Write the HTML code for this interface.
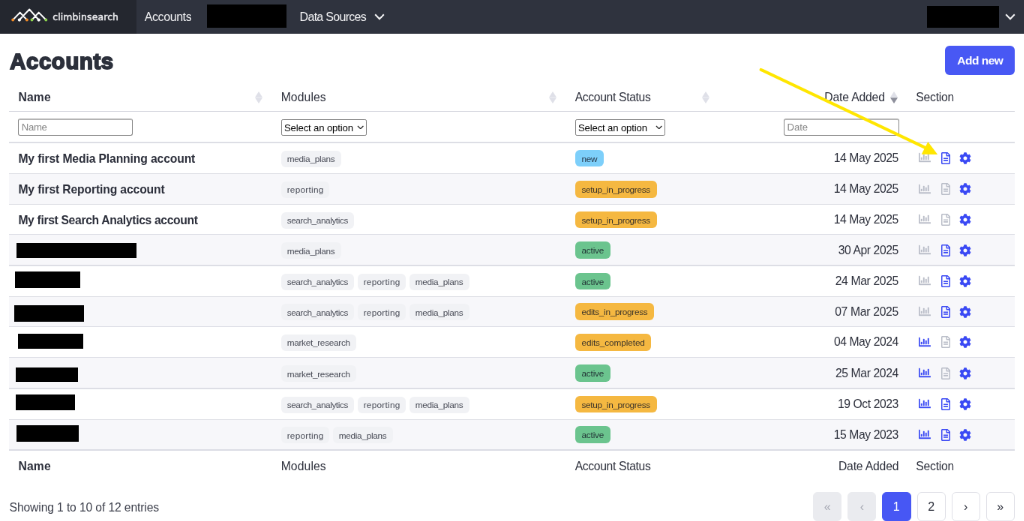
<!DOCTYPE html>
<html lang="en">
<head>
<meta charset="utf-8">
<title>Accounts</title>
<style>
*{box-sizing:border-box;margin:0;padding:0}
html,body{width:1024px;height:521px;overflow:hidden;background:#fff}
body{font-family:"Liberation Sans",Arial,sans-serif;color:#2b2e3a;font-size:15.7px}
#page{position:absolute;left:0;top:0;width:1365.33px;height:694.67px;transform:scale(.75);transform-origin:0 0;background:#fff;overflow:hidden;will-change:transform}
nav{position:absolute;left:0;top:0;width:100%;height:45px;background:#2f333e;color:#f3f3f5;font-size:16px}
.logo{position:absolute;left:0;top:0;width:182px;height:45px;background:#24272f}
.logo svg{position:absolute;left:0;top:0;width:80px;height:45.333px}
.logo .lt{position:absolute;left:70.2px;top:12.6px;font-family:"DejaVu Sans","Liberation Sans",sans-serif;font-size:12.4px;font-weight:normal;color:#ededf0;line-height:20px;white-space:nowrap;-webkit-text-stroke:0.45px #ededf0}
.navt{position:absolute;top:12.6px;line-height:20px;white-space:nowrap}
.chev{position:absolute;top:18.3px;width:14px;height:9px}
.blk{position:absolute;background:#000}
h1{position:absolute;left:13.2px;top:61.6px;font-size:29.2px;line-height:40px;font-weight:bold;color:#2c303b;white-space:nowrap;-webkit-text-stroke:1.9px #2c303b;paint-order:stroke fill}
.btn{position:absolute;left:1260.4px;top:61px;width:93px;height:39px;border-radius:6px;background:#4858f4;color:#fff;font-weight:bold;font-size:15.5px;line-height:40.4px;text-align:center;white-space:nowrap}
table{position:absolute;left:12.4px;top:108px;width:1340.93px;border-collapse:separate;border-spacing:0;table-layout:fixed}
th,td{padding:0 12px;text-align:left;vertical-align:middle;white-space:nowrap;overflow:visible;position:relative}
thead tr.h th{height:41.34375px;padding-bottom:1.34375px;font-weight:normal;padding-top:3px}
thead tr.f th{height:41.34375px;font-weight:normal;padding-bottom:1.34375px;padding-top:1.5px}
tbody td{height:41.34375px;padding-bottom:1.34375px}
tbody tr:nth-child(2n) td{height:41.328125px}
tbody tr:nth-child(3) td,tbody tr:nth-child(6) td{height:40px}
tbody tr:last-child td{padding-bottom:2.671875px}
tbody tr.alt td{background-color:#f7f7fa}
tfoot th{height:40px;font-weight:normal;padding-top:8.6px;vertical-align:top;line-height:24px}
.b{font-weight:bold}
.sort{position:absolute;right:12.3px;top:13.5px;width:10px;height:16px}
.inp{display:inline-block;vertical-align:middle;height:22.6px;width:153px;border:1.34375px solid #858585;border-top:2px solid #b4b4b4;border-radius:3px;background:#fff;font-size:13.2px;line-height:19px;padding-left:3.4px;color:#858585;text-align:left;position:relative;top:-0.5px}
.sel{display:inline-block;vertical-align:middle;position:relative;height:22px;border:1.34375px solid #7f7f7f;border-radius:2.2px;background:#fff;font-size:13.2px;line-height:21.8px;padding-left:3.3px;color:#000;text-align:left}
.sch{position:absolute;right:2.4px;top:6.6px;width:9.4px;height:5.64px}
.c-name span{font-weight:bold;position:relative;top:1.05px}
.c-date span{position:relative;top:0.2px;left:0.6px}
.tag{display:inline-block;vertical-align:middle;position:relative;top:0.9px;height:22px;line-height:19.6px;padding:2.4px 8.4px 0 8px;border-radius:6px;background:#f1f2f5;color:#474a55;font-size:11.8px;margin-right:4.33px}
.st{display:inline-block;vertical-align:middle;position:relative;top:0.4px;height:22.6px;line-height:19.6px;padding:3px 9.4px 0 8.8px;border-radius:6px;font-size:11.8px;color:rgba(20,24,36,.85)}
.st-new{background:#7dcffa}
.st-setup_in_progress,.st-edits_in_progress,.st-edits_completed{background:#f5b841}
.st-active{background:#6bc48e}
.c-date,.h-date{text-align:right}
.ic{display:inline-block;vertical-align:middle;position:relative;top:-0.6px}
.ic.on{color:#3a49f4}
.ic.off{color:#b9bdc8}
.ic-chart{width:16px;height:16px;margin-left:3.6px;margin-right:13.9px;top:-1.2px}
.ic-doc{width:12px;height:16px;margin-right:12.6px}
.ic-gear{width:16px;height:16px}
.info{position:absolute;left:12.6px;top:665.3px;line-height:24px;color:#3b3e4a;white-space:nowrap}
.pg{position:absolute;top:656.2px;width:38px;height:38.5px;border:1.33px solid #dedfe6;border-radius:6px;background:#fff;text-align:center;line-height:38.2px;font-size:16px;color:#2b2e3a}
.pg.dis{background:#eaebef;color:#a7a9b4;border-color:#eaebef}
.pg.cur{background:#4757f4;border-color:#4757f4;color:#fff;margin-left:-0.8px;width:38.8px}
.arrow{position:absolute;left:0;top:0;width:1365.33px;height:694.67px;pointer-events:none}

tfoot th.h-date{padding-right:11px}
th:nth-child(3) .sort{right:13.6px}
.lines{position:absolute;left:0;top:0;width:1365.33px;height:694.67px;pointer-events:none}

.nav1{letter-spacing:-0.426px}
.nav2{letter-spacing:-0.709px}
.h1{letter-spacing:0.705px}
.btn{letter-spacing:-0.499px}
.hName{letter-spacing:0.212px}
.hMod{letter-spacing:0.123px}
.hSt{letter-spacing:-0.337px}
.hDate{letter-spacing:-0.162px}
.hSec{letter-spacing:-0.234px}
.phName{letter-spacing:-0.334px}
.phDate{letter-spacing:-0.114px}
.selopt{letter-spacing:-0.171px}
.n1{letter-spacing:-0.125px}
.n2{letter-spacing:-0.137px}
.n3{letter-spacing:-0.338px}
.t_media_plans{letter-spacing:-0.281px;padding-right:8.28px}
.t_reporting{letter-spacing:0.265px;padding-right:7.73px}
.t_search_analytics{letter-spacing:-0.413px;padding-right:8.41px}
.t_market_research{letter-spacing:-0.291px;padding-right:8.29px}
.s_new{letter-spacing:-0.346px;padding-right:8.75px}
.s_setup_in_progress{letter-spacing:-0.337px;padding-right:8.74px}
.s_active{letter-spacing:-0.173px;padding-right:8.57px}
.s_edits_in_progress{letter-spacing:-0.307px;padding-right:8.71px}
.s_edits_completed{letter-spacing:-0.102px;padding-right:8.50px}
.info{letter-spacing:-0.133px}
.d_14_May_2025{letter-spacing:-0.418px}
.d_30_Apr_2025{letter-spacing:-0.401px}
.d_24_Mar_2025{letter-spacing:-0.349px}
.d_07_Mar_2025{letter-spacing:-0.305px}
.d_04_May_2024{letter-spacing:-0.428px}
.d_25_Mar_2024{letter-spacing:-0.369px}
.d_19_Oct_2023{letter-spacing:-0.407px}
.d_15_May_2023{letter-spacing:-0.418px}
.logo_t{letter-spacing:0.139px}
</style>
</head>
<body>
<div id="page">
<nav>
<div class="logo">
<svg viewBox="0 0 60 34"><path d="M12.9 19.900 20 12.500 26.900 19.900M19.400 19.900 29.400 9.400 38.750 19.900M31.900 19.900 38.750 12.500 46 19.900" fill="none" stroke="#fff" stroke-width="1.5" stroke-linejoin="round"/><circle cx="12.900" cy="19.900" r="1.450" fill="#f28c28"/><circle cx="19.400" cy="19.900" r="1.600" fill="#fff"/><circle cx="26.900" cy="19.900" r="1.450" fill="#f28c28"/><circle cx="31.900" cy="19.900" r="1.450" fill="#8fd44f"/><circle cx="38.750" cy="19.900" r="1.600" fill="#fff"/><circle cx="46" cy="19.900" r="1.450" fill="#8fd44f"/></svg>
<span class="lt logo_t">climbinsearch</span>
</div>
<span class="navt nav1" style="left:192.8px">Accounts</span>
<div class="blk" style="left:276.3px;top:5.9px;width:105.4px;height:31.4px"></div>
<span class="navt nav2" style="left:399.6px">Data Sources</span>
<svg class="chev" style="left:498.6px" viewBox="0 0 14 9"><path d="M1.2 1.300 7 7.300 12.800 1.300" fill="none" stroke="#f3f3f5" stroke-width="2"/></svg>
<div class="blk" style="left:1236.1px;top:7.9px;width:95.9px;height:29px"></div>
<svg class="chev" style="left:1339.700px" viewBox="0 0 14 9"><path d="M1.2 1.300 7 7.300 12.800 1.300" fill="none" stroke="#f3f3f5" stroke-width="2"/></svg>
</nav>
<h1 class="h1">Accounts</h1>
<a class="btn">Add new</a>
<table>
<colgroup><col style="width:350.267px"><col style="width:392px"><col style="width:205.333px"><col style="width:249.333px"><col></colgroup>
<thead>
<tr class="h"><th><span class="b hName">Name</span><svg class="sort" viewBox="0 0 10 16"><path d="M5 0 10 7.800H0z" fill="#dfe0e8"/><path d="M0 8.200h10L5 16z" fill="#dfe0e8"/></svg></th><th><span class="hMod">Modules</span><svg class="sort" viewBox="0 0 10 16"><path d="M5 0 10 7.800H0z" fill="#dfe0e8"/><path d="M0 8.200h10L5 16z" fill="#dfe0e8"/></svg></th><th><span class="hSt">Account Status</span><svg class="sort" viewBox="0 0 10 16"><path d="M5 0 10 7.800H0z" fill="#dfe0e8"/><path d="M0 8.200h10L5 16z" fill="#dfe0e8"/></svg></th><th class="h-date" style="padding-right:29.6px"><span class="hDate">Date Added</span><svg class="sort" viewBox="0 0 10 16"><path d="M5 0 10 7.800H0z" fill="#dfe0e8"/><path d="M0 8.200h10L5 16z" fill="#8d8f9b"/></svg></th><th><span class="hSec">Section</span></th></tr>
<tr class="f"><th><span class="inp phName">Name</span></th><th><span class="sel selopt" style="width:114px">Select an option<svg class="sch" viewBox="0 0 10 6"><path d="M1 1 5 5 9 1" fill="none" stroke="#222" stroke-width="1.35"/></svg></span></th><th><span class="sel selopt" style="width:120.5px">Select an option<svg class="sch" viewBox="0 0 10 6"><path d="M1 1 5 5 9 1" fill="none" stroke="#222" stroke-width="1.35"/></svg></span></th><th class="h-date" style="padding-right:10.6px"><span class="inp phDate" style="width:153.6px">Date</span></th><th></th></tr>
</thead>
<tbody>
<tr><td class="c-name"><span class="n1">My first Media Planning account</span></td><td class="c-mod"><span class="tag t_media_plans">media_plans</span></td><td class="c-st"><span class="st st-new s_new">new</span></td><td class="c-date"><span class="d_14_May_2025">14 May 2025</span></td><td class="c-sec"><svg class="ic ic-chart off" viewBox="0 0 512 512"><path fill="currentColor" stroke="currentColor" stroke-width="14" d="M396.8 352h22.400c6.400 0 12.800-6.400 12.800-12.800V108.800c0-6.400-6.400-12.800-12.800-12.800h-22.400c-6.400 0-12.800 6.400-12.800 12.800v230.400c0 6.400 6.400 12.800 12.800 12.800zm-192 0h22.400c6.400 0 12.800-6.400 12.800-12.800V140.800c0-6.400-6.400-12.800-12.800-12.800h-22.400c-6.400 0-12.800 6.400-12.800 12.800v198.400c0 6.400 6.400 12.800 12.800 12.800zm96 0h22.400c6.400 0 12.800-6.400 12.800-12.800V204.800c0-6.400-6.400-12.800-12.800-12.800h-22.400c-6.400 0-12.800 6.400-12.800 12.800v134.400c0 6.400 6.400 12.800 12.800 12.800zM496 400H48V80c0-8.840-7.160-16-16-16H16C7.160 64 0 71.160 0 80v336c0 17.670 14.330 32 32 32h464c8.840 0 16-7.160 16-16v-16c0-8.840-7.160-16-16-16zm-387.200-48h22.400c6.400 0 12.800-6.400 12.800-12.800v-70.400c0-6.400-6.400-12.800-12.800-12.800h-22.400c-6.400 0-12.800 6.400-12.800 12.800v70.400c0 6.400 6.400 12.800 12.800 12.800z"/></svg><svg class="ic ic-doc on" viewBox="0 0 384 512"><path fill="currentColor" d="M288 248v28c0 6.600-5.400 12-12 12H108c-6.600 0-12-5.400-12-12v-28c0-6.600 5.400-12 12-12h168c6.600 0 12 5.400 12 12zm-12 72H108c-6.600 0-12 5.400-12 12v28c0 6.600 5.400 12 12 12h168c6.600 0 12-5.400 12-12v-28c0-6.600-5.400-12-12-12zm108-188.100V464c0 26.500-21.500 48-48 48H48c-26.500 0-48-21.500-48-48V48C0 21.500 21.500 0 48 0h204.100C264.800 0 277 5.100 286 14.100L369.900 98c9 8.900 14.100 21.200 14.100 33.900zm-128-80V128h76.100L256 51.900zM336 464V176H232c-13.300 0-24-10.700-24-24V48H48v416h288z"/></svg><svg class="ic ic-gear on" viewBox="0 0 512 512"><path fill="currentColor" d="M487.4 315.700l-42.600-24.600c4.300-23.200 4.300-47 0-70.200l42.600-24.600c4.900-2.800 7.100-8.600 5.500-14-11.100-35.600-30-67.800-54.700-94.600-3.800-4.100-10-5.100-14.800-2.300L380.800 110c-17.900-15.400-38.500-27.300-60.800-35.100V25.800c0-5.600-3.900-10.500-9.400-11.700-36.700-8.200-74.300-7.800-109.200 0-5.500 1.200-9.400 6.100-9.400 11.700V75c-22.200 7.900-42.800 19.800-60.800 35.100L88.700 85.500c-4.900-2.800-11-1.900-14.800 2.300-24.700 26.700-43.600 58.900-54.700 94.600-1.700 5.400.600 11.200 5.500 14L67.300 221c-4.300 23.200-4.300 47 0 70.200l-42.600 24.600c-4.900 2.800-7.100 8.600-5.500 14 11.100 35.600 30 67.800 54.700 94.600 3.800 4.100 10 5.100 14.800 2.300l42.600-24.600c17.900 15.400 38.500 27.300 60.800 35.100v49.200c0 5.600 3.900 10.500 9.400 11.700 36.700 8.200 74.300 7.800 109.200 0 5.500-1.200 9.400-6.100 9.400-11.700v-49.200c22.200-7.900 42.800-19.800 60.800-35.100l42.600 24.600c4.900 2.800 11 1.900 14.800-2.300 24.700-26.700 43.600-58.900 54.700-94.600 1.500-5.500-.700-11.300-5.600-14.100zM256 336c-44.100 0-80-35.900-80-80s35.900-80 80-80 80 35.900 80 80-35.900 80-80 80z"/></svg></td></tr>
<tr class="alt"><td class="c-name"><span class="n2">My first Reporting account</span></td><td class="c-mod"><span class="tag t_reporting">reporting</span></td><td class="c-st"><span class="st st-setup_in_progress s_setup_in_progress">setup_in_progress</span></td><td class="c-date"><span class="d_14_May_2025">14 May 2025</span></td><td class="c-sec"><svg class="ic ic-chart off" viewBox="0 0 512 512"><path fill="currentColor" stroke="currentColor" stroke-width="14" d="M396.8 352h22.400c6.400 0 12.800-6.400 12.800-12.800V108.800c0-6.400-6.400-12.800-12.800-12.800h-22.400c-6.400 0-12.800 6.400-12.800 12.800v230.400c0 6.400 6.400 12.800 12.800 12.800zm-192 0h22.400c6.400 0 12.800-6.400 12.800-12.800V140.800c0-6.400-6.400-12.800-12.800-12.800h-22.400c-6.400 0-12.800 6.400-12.800 12.800v198.400c0 6.400 6.400 12.800 12.800 12.800zm96 0h22.400c6.400 0 12.800-6.400 12.800-12.800V204.800c0-6.400-6.400-12.800-12.800-12.800h-22.400c-6.400 0-12.800 6.400-12.800 12.800v134.400c0 6.400 6.400 12.800 12.800 12.800zM496 400H48V80c0-8.840-7.160-16-16-16H16C7.160 64 0 71.160 0 80v336c0 17.670 14.330 32 32 32h464c8.840 0 16-7.160 16-16v-16c0-8.840-7.160-16-16-16zm-387.200-48h22.400c6.400 0 12.800-6.400 12.800-12.800v-70.400c0-6.400-6.400-12.800-12.800-12.800h-22.400c-6.400 0-12.800 6.400-12.800 12.800v70.400c0 6.400 6.400 12.800 12.800 12.800z"/></svg><svg class="ic ic-doc off" viewBox="0 0 384 512"><path fill="currentColor" d="M288 248v28c0 6.600-5.400 12-12 12H108c-6.600 0-12-5.400-12-12v-28c0-6.600 5.400-12 12-12h168c6.600 0 12 5.400 12 12zm-12 72H108c-6.600 0-12 5.400-12 12v28c0 6.600 5.400 12 12 12h168c6.600 0 12-5.400 12-12v-28c0-6.600-5.400-12-12-12zm108-188.100V464c0 26.500-21.500 48-48 48H48c-26.500 0-48-21.500-48-48V48C0 21.500 21.500 0 48 0h204.100C264.800 0 277 5.100 286 14.100L369.900 98c9 8.900 14.100 21.200 14.100 33.900zm-128-80V128h76.100L256 51.900zM336 464V176H232c-13.300 0-24-10.700-24-24V48H48v416h288z"/></svg><svg class="ic ic-gear on" viewBox="0 0 512 512"><path fill="currentColor" d="M487.4 315.700l-42.600-24.600c4.300-23.200 4.300-47 0-70.200l42.600-24.600c4.900-2.800 7.100-8.600 5.500-14-11.100-35.600-30-67.800-54.700-94.600-3.800-4.100-10-5.100-14.800-2.300L380.800 110c-17.900-15.400-38.500-27.300-60.800-35.100V25.800c0-5.600-3.900-10.500-9.400-11.700-36.700-8.200-74.300-7.800-109.200 0-5.500 1.200-9.400 6.100-9.400 11.700V75c-22.200 7.900-42.800 19.800-60.800 35.100L88.700 85.500c-4.900-2.800-11-1.900-14.800 2.300-24.700 26.700-43.600 58.900-54.700 94.600-1.700 5.400.600 11.200 5.500 14L67.300 221c-4.300 23.200-4.300 47 0 70.200l-42.600 24.600c-4.900 2.800-7.100 8.600-5.500 14 11.100 35.600 30 67.800 54.700 94.600 3.800 4.100 10 5.100 14.800 2.300l42.600-24.600c17.900 15.400 38.500 27.300 60.800 35.100v49.200c0 5.600 3.900 10.500 9.400 11.700 36.700 8.200 74.300 7.800 109.200 0 5.500-1.200 9.400-6.100 9.400-11.700v-49.200c22.200-7.900 42.800-19.800 60.800-35.100l42.600 24.600c4.900 2.800 11 1.900 14.800-2.300 24.700-26.700 43.600-58.900 54.700-94.600 1.500-5.500-.700-11.300-5.600-14.100zM256 336c-44.100 0-80-35.900-80-80s35.900-80 80-80 80 35.900 80 80-35.900 80-80 80z"/></svg></td></tr>
<tr><td class="c-name"><span class="n3">My first Search Analytics account</span></td><td class="c-mod"><span class="tag t_search_analytics">search_analytics</span></td><td class="c-st"><span class="st st-setup_in_progress s_setup_in_progress">setup_in_progress</span></td><td class="c-date"><span class="d_14_May_2025">14 May 2025</span></td><td class="c-sec"><svg class="ic ic-chart off" viewBox="0 0 512 512"><path fill="currentColor" stroke="currentColor" stroke-width="14" d="M396.8 352h22.400c6.400 0 12.800-6.400 12.800-12.800V108.800c0-6.400-6.400-12.800-12.800-12.800h-22.400c-6.400 0-12.800 6.400-12.800 12.800v230.400c0 6.400 6.400 12.800 12.800 12.800zm-192 0h22.400c6.400 0 12.800-6.400 12.800-12.800V140.800c0-6.400-6.400-12.800-12.800-12.800h-22.400c-6.400 0-12.800 6.400-12.800 12.800v198.400c0 6.400 6.400 12.800 12.800 12.800zm96 0h22.400c6.400 0 12.800-6.400 12.800-12.800V204.800c0-6.400-6.400-12.800-12.800-12.800h-22.400c-6.400 0-12.800 6.400-12.800 12.800v134.400c0 6.400 6.400 12.800 12.800 12.800zM496 400H48V80c0-8.840-7.160-16-16-16H16C7.160 64 0 71.160 0 80v336c0 17.670 14.330 32 32 32h464c8.840 0 16-7.160 16-16v-16c0-8.840-7.160-16-16-16zm-387.200-48h22.400c6.400 0 12.800-6.400 12.800-12.800v-70.400c0-6.400-6.400-12.800-12.800-12.800h-22.400c-6.400 0-12.800 6.400-12.800 12.800v70.400c0 6.400 6.400 12.800 12.800 12.800z"/></svg><svg class="ic ic-doc off" viewBox="0 0 384 512"><path fill="currentColor" d="M288 248v28c0 6.600-5.400 12-12 12H108c-6.600 0-12-5.400-12-12v-28c0-6.600 5.400-12 12-12h168c6.600 0 12 5.400 12 12zm-12 72H108c-6.600 0-12 5.400-12 12v28c0 6.600 5.400 12 12 12h168c6.600 0 12-5.400 12-12v-28c0-6.600-5.400-12-12-12zm108-188.100V464c0 26.500-21.500 48-48 48H48c-26.500 0-48-21.500-48-48V48C0 21.500 21.500 0 48 0h204.100C264.800 0 277 5.100 286 14.100L369.900 98c9 8.900 14.100 21.200 14.100 33.900zm-128-80V128h76.100L256 51.900zM336 464V176H232c-13.300 0-24-10.700-24-24V48H48v416h288z"/></svg><svg class="ic ic-gear on" viewBox="0 0 512 512"><path fill="currentColor" d="M487.4 315.700l-42.600-24.600c4.300-23.200 4.300-47 0-70.200l42.600-24.600c4.900-2.800 7.100-8.600 5.500-14-11.100-35.600-30-67.800-54.700-94.600-3.800-4.100-10-5.100-14.800-2.300L380.800 110c-17.900-15.400-38.500-27.300-60.800-35.100V25.800c0-5.600-3.900-10.500-9.400-11.700-36.700-8.200-74.300-7.800-109.200 0-5.500 1.200-9.400 6.100-9.400 11.700V75c-22.200 7.900-42.800 19.800-60.800 35.100L88.700 85.500c-4.900-2.800-11-1.900-14.800 2.300-24.700 26.700-43.600 58.900-54.700 94.600-1.700 5.400.600 11.200 5.500 14L67.300 221c-4.300 23.200-4.300 47 0 70.200l-42.600 24.600c-4.900 2.800-7.100 8.600-5.500 14 11.100 35.600 30 67.800 54.700 94.600 3.800 4.100 10 5.100 14.800 2.300l42.600-24.600c17.900 15.400 38.500 27.300 60.800 35.100v49.200c0 5.600 3.900 10.500 9.400 11.700 36.700 8.200 74.300 7.800 109.200 0 5.500-1.200 9.400-6.100 9.400-11.700v-49.200c22.200-7.900 42.800-19.800 60.800-35.100l42.600 24.600c4.900 2.800 11 1.900 14.800-2.300 24.700-26.700 43.600-58.900 54.700-94.600 1.500-5.500-.700-11.300-5.600-14.100zM256 336c-44.100 0-80-35.900-80-80s35.900-80 80-80 80 35.900 80 80-35.900 80-80 80z"/></svg></td></tr>
<tr class="alt"><td class="c-name"></td><td class="c-mod"><span class="tag t_media_plans">media_plans</span></td><td class="c-st"><span class="st st-active s_active">active</span></td><td class="c-date"><span class="d_30_Apr_2025">30 Apr 2025</span></td><td class="c-sec"><svg class="ic ic-chart off" viewBox="0 0 512 512"><path fill="currentColor" stroke="currentColor" stroke-width="14" d="M396.8 352h22.400c6.400 0 12.800-6.400 12.800-12.800V108.800c0-6.400-6.400-12.800-12.800-12.800h-22.400c-6.400 0-12.800 6.400-12.800 12.800v230.400c0 6.400 6.400 12.800 12.800 12.800zm-192 0h22.400c6.400 0 12.800-6.400 12.800-12.800V140.800c0-6.400-6.400-12.800-12.800-12.800h-22.400c-6.400 0-12.800 6.400-12.800 12.800v198.400c0 6.400 6.400 12.800 12.800 12.800zm96 0h22.400c6.400 0 12.800-6.400 12.800-12.800V204.800c0-6.400-6.400-12.800-12.800-12.800h-22.400c-6.400 0-12.800 6.400-12.800 12.800v134.400c0 6.400 6.400 12.800 12.800 12.800zM496 400H48V80c0-8.840-7.160-16-16-16H16C7.160 64 0 71.160 0 80v336c0 17.670 14.330 32 32 32h464c8.840 0 16-7.160 16-16v-16c0-8.840-7.160-16-16-16zm-387.200-48h22.400c6.400 0 12.800-6.400 12.800-12.800v-70.400c0-6.400-6.400-12.800-12.800-12.800h-22.400c-6.400 0-12.800 6.400-12.800 12.800v70.400c0 6.400 6.400 12.800 12.800 12.800z"/></svg><svg class="ic ic-doc on" viewBox="0 0 384 512"><path fill="currentColor" d="M288 248v28c0 6.600-5.400 12-12 12H108c-6.600 0-12-5.400-12-12v-28c0-6.600 5.400-12 12-12h168c6.600 0 12 5.400 12 12zm-12 72H108c-6.600 0-12 5.400-12 12v28c0 6.600 5.400 12 12 12h168c6.600 0 12-5.400 12-12v-28c0-6.600-5.400-12-12-12zm108-188.100V464c0 26.500-21.500 48-48 48H48c-26.500 0-48-21.500-48-48V48C0 21.500 21.500 0 48 0h204.100C264.800 0 277 5.100 286 14.100L369.900 98c9 8.900 14.100 21.200 14.100 33.900zm-128-80V128h76.100L256 51.900zM336 464V176H232c-13.300 0-24-10.700-24-24V48H48v416h288z"/></svg><svg class="ic ic-gear on" viewBox="0 0 512 512"><path fill="currentColor" d="M487.4 315.700l-42.600-24.600c4.300-23.200 4.300-47 0-70.200l42.600-24.600c4.900-2.800 7.100-8.600 5.500-14-11.100-35.600-30-67.800-54.700-94.600-3.800-4.100-10-5.100-14.800-2.300L380.800 110c-17.900-15.400-38.500-27.300-60.800-35.100V25.800c0-5.600-3.900-10.500-9.400-11.700-36.700-8.200-74.300-7.800-109.200 0-5.500 1.200-9.400 6.100-9.400 11.700V75c-22.200 7.900-42.800 19.800-60.800 35.100L88.700 85.500c-4.900-2.800-11-1.900-14.800 2.300-24.700 26.700-43.600 58.900-54.700 94.600-1.700 5.400.600 11.200 5.500 14L67.300 221c-4.300 23.200-4.300 47 0 70.200l-42.600 24.600c-4.900 2.800-7.100 8.600-5.500 14 11.100 35.600 30 67.800 54.700 94.600 3.800 4.100 10 5.100 14.800 2.300l42.600-24.600c17.900 15.400 38.500 27.300 60.800 35.100v49.200c0 5.600 3.900 10.500 9.400 11.700 36.700 8.200 74.300 7.800 109.200 0 5.500-1.200 9.400-6.100 9.400-11.700v-49.200c22.200-7.900 42.800-19.800 60.800-35.100l42.600 24.600c4.900 2.800 11 1.900 14.800-2.300 24.700-26.700 43.600-58.900 54.700-94.600 1.500-5.500-.700-11.300-5.600-14.100zM256 336c-44.100 0-80-35.900-80-80s35.900-80 80-80 80 35.900 80 80-35.900 80-80 80z"/></svg></td></tr>
<tr><td class="c-name"></td><td class="c-mod"><span class="tag t_search_analytics">search_analytics</span><span class="tag t_reporting">reporting</span><span class="tag t_media_plans">media_plans</span></td><td class="c-st"><span class="st st-active s_active">active</span></td><td class="c-date"><span class="d_24_Mar_2025">24 Mar 2025</span></td><td class="c-sec"><svg class="ic ic-chart off" viewBox="0 0 512 512"><path fill="currentColor" stroke="currentColor" stroke-width="14" d="M396.8 352h22.400c6.400 0 12.800-6.400 12.800-12.800V108.800c0-6.400-6.400-12.800-12.800-12.800h-22.400c-6.400 0-12.800 6.400-12.800 12.800v230.400c0 6.400 6.400 12.800 12.800 12.800zm-192 0h22.400c6.400 0 12.800-6.400 12.800-12.800V140.800c0-6.400-6.400-12.800-12.800-12.800h-22.400c-6.400 0-12.800 6.400-12.800 12.800v198.400c0 6.400 6.400 12.800 12.800 12.800zm96 0h22.400c6.400 0 12.800-6.400 12.800-12.800V204.800c0-6.400-6.400-12.800-12.800-12.800h-22.400c-6.400 0-12.800 6.400-12.800 12.800v134.400c0 6.400 6.400 12.800 12.800 12.800zM496 400H48V80c0-8.840-7.160-16-16-16H16C7.160 64 0 71.160 0 80v336c0 17.670 14.330 32 32 32h464c8.840 0 16-7.160 16-16v-16c0-8.840-7.160-16-16-16zm-387.200-48h22.400c6.400 0 12.800-6.400 12.800-12.800v-70.400c0-6.400-6.400-12.800-12.800-12.800h-22.400c-6.400 0-12.800 6.400-12.800 12.800v70.400c0 6.400 6.400 12.800 12.800 12.800z"/></svg><svg class="ic ic-doc on" viewBox="0 0 384 512"><path fill="currentColor" d="M288 248v28c0 6.600-5.400 12-12 12H108c-6.600 0-12-5.400-12-12v-28c0-6.600 5.400-12 12-12h168c6.600 0 12 5.400 12 12zm-12 72H108c-6.600 0-12 5.400-12 12v28c0 6.600 5.400 12 12 12h168c6.600 0 12-5.400 12-12v-28c0-6.600-5.400-12-12-12zm108-188.100V464c0 26.500-21.500 48-48 48H48c-26.500 0-48-21.500-48-48V48C0 21.500 21.500 0 48 0h204.100C264.800 0 277 5.100 286 14.100L369.900 98c9 8.900 14.100 21.200 14.100 33.900zm-128-80V128h76.100L256 51.900zM336 464V176H232c-13.300 0-24-10.700-24-24V48H48v416h288z"/></svg><svg class="ic ic-gear on" viewBox="0 0 512 512"><path fill="currentColor" d="M487.4 315.700l-42.600-24.600c4.300-23.200 4.300-47 0-70.200l42.600-24.600c4.900-2.800 7.100-8.600 5.500-14-11.100-35.600-30-67.800-54.700-94.600-3.800-4.100-10-5.100-14.800-2.300L380.800 110c-17.900-15.400-38.500-27.300-60.800-35.100V25.800c0-5.600-3.900-10.500-9.400-11.700-36.700-8.200-74.300-7.800-109.200 0-5.500 1.200-9.400 6.100-9.400 11.700V75c-22.200 7.900-42.800 19.800-60.800 35.100L88.700 85.500c-4.900-2.800-11-1.900-14.800 2.300-24.700 26.700-43.600 58.900-54.700 94.600-1.700 5.400.600 11.200 5.500 14L67.300 221c-4.300 23.200-4.300 47 0 70.200l-42.600 24.600c-4.900 2.800-7.100 8.600-5.500 14 11.100 35.600 30 67.800 54.700 94.600 3.800 4.100 10 5.100 14.800 2.300l42.600-24.600c17.900 15.400 38.500 27.300 60.800 35.100v49.200c0 5.600 3.900 10.500 9.400 11.700 36.700 8.200 74.300 7.800 109.200 0 5.500-1.200 9.400-6.100 9.400-11.700v-49.200c22.200-7.900 42.800-19.800 60.800-35.100l42.600 24.600c4.900 2.800 11 1.900 14.800-2.300 24.700-26.700 43.600-58.900 54.700-94.600 1.500-5.500-.700-11.300-5.600-14.100zM256 336c-44.100 0-80-35.900-80-80s35.900-80 80-80 80 35.900 80 80-35.900 80-80 80z"/></svg></td></tr>
<tr class="alt"><td class="c-name"></td><td class="c-mod"><span class="tag t_search_analytics">search_analytics</span><span class="tag t_reporting">reporting</span><span class="tag t_media_plans">media_plans</span></td><td class="c-st"><span class="st st-edits_in_progress s_edits_in_progress">edits_in_progress</span></td><td class="c-date"><span class="d_07_Mar_2025">07 Mar 2025</span></td><td class="c-sec"><svg class="ic ic-chart off" viewBox="0 0 512 512"><path fill="currentColor" stroke="currentColor" stroke-width="14" d="M396.8 352h22.400c6.400 0 12.800-6.400 12.800-12.800V108.800c0-6.400-6.400-12.800-12.800-12.800h-22.400c-6.400 0-12.800 6.400-12.800 12.800v230.400c0 6.400 6.400 12.800 12.800 12.800zm-192 0h22.400c6.400 0 12.800-6.400 12.800-12.800V140.800c0-6.400-6.400-12.800-12.800-12.800h-22.400c-6.400 0-12.800 6.400-12.800 12.800v198.400c0 6.400 6.400 12.800 12.800 12.800zm96 0h22.400c6.400 0 12.800-6.400 12.800-12.800V204.800c0-6.400-6.400-12.800-12.800-12.800h-22.400c-6.400 0-12.800 6.400-12.800 12.800v134.400c0 6.400 6.400 12.800 12.800 12.800zM496 400H48V80c0-8.840-7.160-16-16-16H16C7.160 64 0 71.160 0 80v336c0 17.670 14.330 32 32 32h464c8.840 0 16-7.160 16-16v-16c0-8.840-7.160-16-16-16zm-387.200-48h22.400c6.400 0 12.800-6.400 12.800-12.800v-70.400c0-6.400-6.400-12.800-12.800-12.800h-22.400c-6.400 0-12.800 6.400-12.800 12.800v70.400c0 6.400 6.400 12.800 12.800 12.800z"/></svg><svg class="ic ic-doc on" viewBox="0 0 384 512"><path fill="currentColor" d="M288 248v28c0 6.600-5.400 12-12 12H108c-6.600 0-12-5.400-12-12v-28c0-6.600 5.400-12 12-12h168c6.600 0 12 5.400 12 12zm-12 72H108c-6.600 0-12 5.400-12 12v28c0 6.600 5.400 12 12 12h168c6.600 0 12-5.400 12-12v-28c0-6.600-5.400-12-12-12zm108-188.100V464c0 26.500-21.500 48-48 48H48c-26.500 0-48-21.500-48-48V48C0 21.500 21.500 0 48 0h204.100C264.800 0 277 5.100 286 14.100L369.900 98c9 8.900 14.100 21.200 14.100 33.900zm-128-80V128h76.100L256 51.900zM336 464V176H232c-13.300 0-24-10.700-24-24V48H48v416h288z"/></svg><svg class="ic ic-gear on" viewBox="0 0 512 512"><path fill="currentColor" d="M487.4 315.700l-42.600-24.600c4.300-23.200 4.300-47 0-70.200l42.600-24.600c4.900-2.800 7.100-8.600 5.500-14-11.100-35.600-30-67.800-54.700-94.600-3.800-4.100-10-5.100-14.800-2.300L380.800 110c-17.900-15.400-38.500-27.300-60.800-35.100V25.800c0-5.600-3.900-10.500-9.400-11.700-36.700-8.200-74.300-7.800-109.200 0-5.500 1.200-9.400 6.100-9.400 11.700V75c-22.200 7.900-42.800 19.800-60.800 35.100L88.700 85.500c-4.900-2.800-11-1.900-14.800 2.300-24.700 26.700-43.600 58.900-54.700 94.600-1.700 5.400.600 11.200 5.500 14L67.300 221c-4.300 23.200-4.300 47 0 70.200l-42.600 24.600c-4.900 2.800-7.100 8.600-5.500 14 11.100 35.600 30 67.800 54.700 94.600 3.800 4.100 10 5.100 14.800 2.300l42.600-24.600c17.900 15.400 38.500 27.300 60.800 35.100v49.200c0 5.600 3.900 10.500 9.400 11.700 36.700 8.200 74.300 7.800 109.200 0 5.500-1.200 9.400-6.100 9.400-11.700v-49.200c22.200-7.900 42.800-19.800 60.800-35.100l42.600 24.600c4.900 2.800 11 1.900 14.800-2.300 24.700-26.700 43.600-58.900 54.700-94.600 1.500-5.500-.700-11.300-5.600-14.100zM256 336c-44.100 0-80-35.900-80-80s35.900-80 80-80 80 35.900 80 80-35.900 80-80 80z"/></svg></td></tr>
<tr><td class="c-name"></td><td class="c-mod"><span class="tag t_market_research">market_research</span></td><td class="c-st"><span class="st st-edits_completed s_edits_completed">edits_completed</span></td><td class="c-date"><span class="d_04_May_2024">04 May 2024</span></td><td class="c-sec"><svg class="ic ic-chart on" viewBox="0 0 512 512"><path fill="currentColor" stroke="currentColor" stroke-width="14" d="M396.8 352h22.400c6.400 0 12.800-6.400 12.800-12.800V108.800c0-6.400-6.400-12.800-12.800-12.800h-22.400c-6.400 0-12.800 6.400-12.800 12.800v230.400c0 6.400 6.400 12.800 12.800 12.800zm-192 0h22.400c6.400 0 12.800-6.400 12.800-12.800V140.800c0-6.400-6.400-12.800-12.800-12.800h-22.400c-6.400 0-12.800 6.400-12.800 12.800v198.400c0 6.400 6.400 12.800 12.800 12.800zm96 0h22.400c6.400 0 12.800-6.400 12.800-12.800V204.800c0-6.400-6.400-12.800-12.800-12.800h-22.400c-6.400 0-12.800 6.400-12.800 12.800v134.400c0 6.400 6.400 12.800 12.800 12.800zM496 400H48V80c0-8.840-7.160-16-16-16H16C7.160 64 0 71.160 0 80v336c0 17.670 14.330 32 32 32h464c8.840 0 16-7.160 16-16v-16c0-8.840-7.160-16-16-16zm-387.200-48h22.400c6.400 0 12.800-6.400 12.800-12.800v-70.400c0-6.400-6.400-12.800-12.800-12.800h-22.400c-6.400 0-12.800 6.400-12.800 12.800v70.400c0 6.400 6.400 12.800 12.800 12.800z"/></svg><svg class="ic ic-doc off" viewBox="0 0 384 512"><path fill="currentColor" d="M288 248v28c0 6.600-5.400 12-12 12H108c-6.600 0-12-5.400-12-12v-28c0-6.600 5.400-12 12-12h168c6.600 0 12 5.400 12 12zm-12 72H108c-6.600 0-12 5.400-12 12v28c0 6.600 5.400 12 12 12h168c6.600 0 12-5.400 12-12v-28c0-6.600-5.400-12-12-12zm108-188.100V464c0 26.500-21.500 48-48 48H48c-26.500 0-48-21.500-48-48V48C0 21.500 21.500 0 48 0h204.100C264.800 0 277 5.100 286 14.100L369.900 98c9 8.900 14.100 21.200 14.100 33.900zm-128-80V128h76.100L256 51.900zM336 464V176H232c-13.300 0-24-10.700-24-24V48H48v416h288z"/></svg><svg class="ic ic-gear on" viewBox="0 0 512 512"><path fill="currentColor" d="M487.4 315.700l-42.600-24.600c4.300-23.200 4.300-47 0-70.200l42.600-24.600c4.900-2.800 7.100-8.600 5.500-14-11.100-35.600-30-67.800-54.700-94.600-3.800-4.100-10-5.100-14.800-2.300L380.800 110c-17.900-15.400-38.500-27.300-60.800-35.100V25.800c0-5.600-3.900-10.500-9.400-11.700-36.700-8.200-74.300-7.800-109.200 0-5.500 1.200-9.400 6.100-9.400 11.700V75c-22.200 7.900-42.800 19.800-60.800 35.100L88.700 85.500c-4.900-2.800-11-1.900-14.800 2.300-24.700 26.700-43.600 58.900-54.700 94.600-1.700 5.400.600 11.200 5.500 14L67.300 221c-4.300 23.200-4.300 47 0 70.200l-42.600 24.600c-4.900 2.800-7.100 8.600-5.500 14 11.100 35.600 30 67.800 54.700 94.600 3.800 4.100 10 5.100 14.800 2.300l42.600-24.600c17.900 15.400 38.500 27.300 60.800 35.100v49.200c0 5.600 3.900 10.500 9.400 11.700 36.700 8.200 74.300 7.800 109.200 0 5.500-1.200 9.400-6.100 9.400-11.700v-49.200c22.200-7.900 42.800-19.800 60.800-35.100l42.600 24.600c4.900 2.800 11 1.900 14.800-2.300 24.700-26.700 43.600-58.900 54.700-94.600 1.500-5.500-.700-11.300-5.600-14.100zM256 336c-44.100 0-80-35.900-80-80s35.900-80 80-80 80 35.900 80 80-35.900 80-80 80z"/></svg></td></tr>
<tr class="alt"><td class="c-name"></td><td class="c-mod"><span class="tag t_market_research">market_research</span></td><td class="c-st"><span class="st st-active s_active">active</span></td><td class="c-date"><span class="d_25_Mar_2024">25 Mar 2024</span></td><td class="c-sec"><svg class="ic ic-chart on" viewBox="0 0 512 512"><path fill="currentColor" stroke="currentColor" stroke-width="14" d="M396.8 352h22.400c6.400 0 12.800-6.400 12.800-12.800V108.800c0-6.400-6.400-12.800-12.800-12.800h-22.400c-6.400 0-12.800 6.400-12.800 12.800v230.400c0 6.400 6.400 12.800 12.800 12.800zm-192 0h22.400c6.400 0 12.800-6.400 12.800-12.800V140.800c0-6.400-6.400-12.800-12.800-12.800h-22.400c-6.400 0-12.800 6.400-12.800 12.800v198.400c0 6.400 6.400 12.800 12.800 12.800zm96 0h22.400c6.400 0 12.800-6.400 12.800-12.800V204.800c0-6.400-6.400-12.800-12.800-12.800h-22.400c-6.400 0-12.800 6.400-12.800 12.800v134.400c0 6.400 6.400 12.800 12.800 12.800zM496 400H48V80c0-8.840-7.160-16-16-16H16C7.160 64 0 71.160 0 80v336c0 17.670 14.330 32 32 32h464c8.840 0 16-7.160 16-16v-16c0-8.840-7.160-16-16-16zm-387.200-48h22.400c6.400 0 12.800-6.400 12.800-12.800v-70.400c0-6.400-6.400-12.800-12.800-12.800h-22.400c-6.400 0-12.800 6.400-12.800 12.800v70.400c0 6.400 6.400 12.800 12.800 12.800z"/></svg><svg class="ic ic-doc off" viewBox="0 0 384 512"><path fill="currentColor" d="M288 248v28c0 6.600-5.400 12-12 12H108c-6.600 0-12-5.400-12-12v-28c0-6.600 5.400-12 12-12h168c6.600 0 12 5.400 12 12zm-12 72H108c-6.600 0-12 5.400-12 12v28c0 6.600 5.400 12 12 12h168c6.600 0 12-5.400 12-12v-28c0-6.600-5.400-12-12-12zm108-188.100V464c0 26.500-21.500 48-48 48H48c-26.500 0-48-21.500-48-48V48C0 21.500 21.500 0 48 0h204.100C264.800 0 277 5.100 286 14.100L369.900 98c9 8.900 14.100 21.200 14.100 33.900zm-128-80V128h76.100L256 51.900zM336 464V176H232c-13.300 0-24-10.700-24-24V48H48v416h288z"/></svg><svg class="ic ic-gear on" viewBox="0 0 512 512"><path fill="currentColor" d="M487.4 315.700l-42.600-24.600c4.300-23.200 4.300-47 0-70.200l42.600-24.600c4.900-2.800 7.100-8.600 5.500-14-11.100-35.600-30-67.800-54.700-94.600-3.800-4.100-10-5.100-14.800-2.300L380.800 110c-17.900-15.400-38.500-27.300-60.800-35.100V25.800c0-5.600-3.900-10.500-9.400-11.700-36.700-8.200-74.300-7.800-109.200 0-5.500 1.200-9.400 6.100-9.400 11.700V75c-22.200 7.900-42.800 19.800-60.800 35.100L88.700 85.500c-4.900-2.800-11-1.900-14.800 2.300-24.700 26.700-43.600 58.900-54.700 94.600-1.700 5.400.600 11.200 5.500 14L67.300 221c-4.300 23.200-4.300 47 0 70.200l-42.600 24.600c-4.900 2.800-7.100 8.600-5.500 14 11.100 35.600 30 67.800 54.700 94.600 3.800 4.100 10 5.100 14.800 2.300l42.600-24.600c17.900 15.400 38.500 27.300 60.800 35.100v49.200c0 5.600 3.900 10.500 9.400 11.700 36.700 8.200 74.300 7.800 109.200 0 5.500-1.200 9.400-6.100 9.400-11.700v-49.200c22.200-7.900 42.800-19.800 60.800-35.100l42.600 24.600c4.900 2.800 11 1.900 14.800-2.300 24.700-26.700 43.600-58.900 54.700-94.600 1.500-5.500-.700-11.300-5.600-14.100zM256 336c-44.100 0-80-35.900-80-80s35.900-80 80-80 80 35.900 80 80-35.900 80-80 80z"/></svg></td></tr>
<tr><td class="c-name"></td><td class="c-mod"><span class="tag t_search_analytics">search_analytics</span><span class="tag t_reporting">reporting</span><span class="tag t_media_plans">media_plans</span></td><td class="c-st"><span class="st st-setup_in_progress s_setup_in_progress">setup_in_progress</span></td><td class="c-date"><span class="d_19_Oct_2023">19 Oct 2023</span></td><td class="c-sec"><svg class="ic ic-chart on" viewBox="0 0 512 512"><path fill="currentColor" stroke="currentColor" stroke-width="14" d="M396.8 352h22.400c6.400 0 12.800-6.400 12.800-12.800V108.800c0-6.400-6.400-12.800-12.800-12.800h-22.400c-6.400 0-12.800 6.400-12.800 12.800v230.400c0 6.400 6.400 12.800 12.800 12.800zm-192 0h22.400c6.400 0 12.800-6.400 12.800-12.800V140.800c0-6.400-6.400-12.800-12.800-12.800h-22.400c-6.400 0-12.800 6.400-12.800 12.800v198.400c0 6.400 6.400 12.800 12.800 12.800zm96 0h22.400c6.400 0 12.800-6.400 12.800-12.800V204.800c0-6.400-6.400-12.800-12.800-12.800h-22.400c-6.400 0-12.800 6.400-12.800 12.800v134.400c0 6.400 6.400 12.800 12.800 12.800zM496 400H48V80c0-8.840-7.160-16-16-16H16C7.160 64 0 71.160 0 80v336c0 17.670 14.330 32 32 32h464c8.840 0 16-7.160 16-16v-16c0-8.840-7.160-16-16-16zm-387.200-48h22.400c6.400 0 12.800-6.400 12.800-12.800v-70.400c0-6.400-6.400-12.800-12.800-12.800h-22.400c-6.400 0-12.800 6.400-12.800 12.800v70.400c0 6.400 6.400 12.800 12.800 12.800z"/></svg><svg class="ic ic-doc on" viewBox="0 0 384 512"><path fill="currentColor" d="M288 248v28c0 6.600-5.400 12-12 12H108c-6.600 0-12-5.400-12-12v-28c0-6.600 5.400-12 12-12h168c6.600 0 12 5.400 12 12zm-12 72H108c-6.600 0-12 5.400-12 12v28c0 6.600 5.400 12 12 12h168c6.600 0 12-5.400 12-12v-28c0-6.600-5.400-12-12-12zm108-188.100V464c0 26.500-21.500 48-48 48H48c-26.500 0-48-21.500-48-48V48C0 21.500 21.500 0 48 0h204.100C264.800 0 277 5.100 286 14.100L369.900 98c9 8.900 14.100 21.200 14.100 33.900zm-128-80V128h76.100L256 51.900zM336 464V176H232c-13.300 0-24-10.700-24-24V48H48v416h288z"/></svg><svg class="ic ic-gear on" viewBox="0 0 512 512"><path fill="currentColor" d="M487.4 315.700l-42.600-24.600c4.300-23.200 4.300-47 0-70.200l42.600-24.600c4.900-2.800 7.100-8.600 5.500-14-11.100-35.600-30-67.800-54.700-94.600-3.800-4.100-10-5.100-14.800-2.300L380.800 110c-17.900-15.400-38.500-27.300-60.800-35.100V25.800c0-5.600-3.900-10.500-9.400-11.700-36.700-8.200-74.300-7.800-109.200 0-5.500 1.200-9.400 6.100-9.400 11.700V75c-22.200 7.900-42.800 19.800-60.800 35.100L88.700 85.500c-4.900-2.800-11-1.900-14.800 2.300-24.700 26.700-43.600 58.900-54.700 94.600-1.700 5.400.600 11.200 5.500 14L67.300 221c-4.300 23.200-4.300 47 0 70.200l-42.600 24.600c-4.900 2.800-7.100 8.600-5.500 14 11.100 35.600 30 67.800 54.700 94.600 3.800 4.100 10 5.100 14.800 2.300l42.600-24.600c17.900 15.400 38.500 27.300 60.800 35.100v49.200c0 5.600 3.900 10.500 9.400 11.700 36.700 8.200 74.300 7.800 109.200 0 5.500-1.200 9.400-6.100 9.400-11.700v-49.200c22.200-7.900 42.800-19.800 60.800-35.100l42.600 24.600c4.900 2.800 11 1.900 14.800-2.300 24.700-26.700 43.600-58.900 54.700-94.600 1.500-5.500-.700-11.300-5.600-14.100zM256 336c-44.100 0-80-35.900-80-80s35.900-80 80-80 80 35.900 80 80-35.900 80-80 80z"/></svg></td></tr>
<tr class="alt"><td class="c-name"></td><td class="c-mod"><span class="tag t_reporting">reporting</span><span class="tag t_media_plans">media_plans</span></td><td class="c-st"><span class="st st-active s_active">active</span></td><td class="c-date"><span class="d_15_May_2023">15 May 2023</span></td><td class="c-sec"><svg class="ic ic-chart on" viewBox="0 0 512 512"><path fill="currentColor" stroke="currentColor" stroke-width="14" d="M396.8 352h22.400c6.400 0 12.800-6.400 12.800-12.800V108.800c0-6.400-6.400-12.800-12.800-12.800h-22.400c-6.400 0-12.800 6.400-12.800 12.800v230.400c0 6.400 6.400 12.800 12.800 12.800zm-192 0h22.400c6.400 0 12.800-6.400 12.800-12.800V140.800c0-6.400-6.400-12.800-12.800-12.800h-22.400c-6.400 0-12.800 6.400-12.800 12.800v198.400c0 6.400 6.400 12.800 12.800 12.800zm96 0h22.400c6.400 0 12.800-6.400 12.800-12.800V204.800c0-6.400-6.400-12.800-12.800-12.800h-22.400c-6.400 0-12.800 6.400-12.800 12.800v134.400c0 6.400 6.400 12.800 12.800 12.800zM496 400H48V80c0-8.840-7.160-16-16-16H16C7.160 64 0 71.160 0 80v336c0 17.670 14.330 32 32 32h464c8.840 0 16-7.160 16-16v-16c0-8.840-7.160-16-16-16zm-387.200-48h22.400c6.400 0 12.800-6.400 12.800-12.800v-70.400c0-6.400-6.400-12.800-12.800-12.800h-22.400c-6.400 0-12.800 6.400-12.800 12.800v70.400c0 6.400 6.400 12.800 12.800 12.800z"/></svg><svg class="ic ic-doc on" viewBox="0 0 384 512"><path fill="currentColor" d="M288 248v28c0 6.600-5.400 12-12 12H108c-6.600 0-12-5.400-12-12v-28c0-6.600 5.400-12 12-12h168c6.600 0 12 5.400 12 12zm-12 72H108c-6.600 0-12 5.400-12 12v28c0 6.600 5.400 12 12 12h168c6.600 0 12-5.400 12-12v-28c0-6.600-5.400-12-12-12zm108-188.100V464c0 26.500-21.500 48-48 48H48c-26.500 0-48-21.500-48-48V48C0 21.500 21.500 0 48 0h204.100C264.800 0 277 5.100 286 14.100L369.900 98c9 8.900 14.100 21.200 14.100 33.900zm-128-80V128h76.100L256 51.900zM336 464V176H232c-13.300 0-24-10.700-24-24V48H48v416h288z"/></svg><svg class="ic ic-gear on" viewBox="0 0 512 512"><path fill="currentColor" d="M487.4 315.700l-42.600-24.600c4.300-23.200 4.300-47 0-70.200l42.600-24.600c4.900-2.800 7.100-8.600 5.500-14-11.100-35.600-30-67.800-54.700-94.600-3.800-4.100-10-5.100-14.800-2.300L380.800 110c-17.900-15.400-38.500-27.300-60.800-35.100V25.800c0-5.600-3.900-10.500-9.400-11.700-36.700-8.200-74.300-7.800-109.200 0-5.500 1.200-9.400 6.100-9.400 11.700V75c-22.200 7.900-42.800 19.800-60.800 35.100L88.700 85.500c-4.900-2.800-11-1.900-14.800 2.300-24.700 26.700-43.600 58.900-54.700 94.600-1.700 5.400.600 11.200 5.500 14L67.300 221c-4.300 23.200-4.300 47 0 70.200l-42.600 24.600c-4.900 2.800-7.100 8.600-5.500 14 11.100 35.600 30 67.800 54.700 94.600 3.800 4.100 10 5.100 14.800 2.300l42.600-24.600c17.900 15.400 38.500 27.300 60.800 35.100v49.200c0 5.600 3.900 10.500 9.400 11.700 36.700 8.200 74.300 7.800 109.200 0 5.500-1.200 9.400-6.100 9.400-11.700v-49.200c22.200-7.900 42.800-19.800 60.800-35.100l42.600 24.600c4.900 2.800 11 1.900 14.800-2.300 24.700-26.700 43.600-58.900 54.700-94.600 1.500-5.500-.700-11.300-5.600-14.100zM256 336c-44.100 0-80-35.900-80-80s35.900-80 80-80 80 35.900 80 80-35.900 80-80 80z"/></svg></td></tr>
</tbody>
<tfoot>
<tr><th><span class="b hName">Name</span></th><th><span class="hMod">Modules</span></th><th><span class="hSt">Account Status</span></th><th class="h-date"><span class="hDate">Date Added</span></th><th><span class="hSec">Section</span></th></tr>
</tfoot>
</table>
<svg class="lines" viewBox="0 0 1024 521" shape-rendering="crispEdges"><rect x="9.3" y="111" width="1005.7" height="1" fill="#d4d5dd"/><rect x="9.3" y="142" width="1005.7" height="1" fill="#dddee5"/><rect x="9.3" y="173" width="1005.7" height="1" fill="#dddee5"/><rect x="9.3" y="204" width="1005.7" height="1" fill="#dddee5"/><rect x="9.3" y="234" width="1005.7" height="1" fill="#dddee5"/><rect x="9.3" y="265" width="1005.7" height="1" fill="#dddee5"/><rect x="9.3" y="296" width="1005.7" height="1" fill="#dddee5"/><rect x="9.3" y="326" width="1005.7" height="1" fill="#dddee5"/><rect x="9.3" y="357" width="1005.7" height="1" fill="#dddee5"/><rect x="9.3" y="388" width="1005.7" height="1" fill="#dddee5"/><rect x="9.3" y="419" width="1005.7" height="1" fill="#dddee5"/><rect x="9.3" y="449" width="1005.7" height="2" fill="#dbdce4"/></svg>
<div class="blk" style="left:22.13px;top:324.00px;width:160.27px;height:19.73px"></div>
<div class="blk" style="left:20.40px;top:362.13px;width:86.27px;height:21.47px"></div>
<div class="blk" style="left:18.67px;top:407.20px;width:93.20px;height:21.87px"></div>
<div class="blk" style="left:24.00px;top:445.47px;width:87.07px;height:19.73px"></div>
<div class="blk" style="left:21.07px;top:490.27px;width:82.67px;height:18.93px"></div>
<div class="blk" style="left:21.33px;top:526.13px;width:78.20px;height:20.40px"></div>
<div class="blk" style="left:22.13px;top:566.53px;width:83.07px;height:22.40px"></div>
<div class="info info">Showing 1 to 10 of 12 entries</div>
<div class="pg dis" style="left:1084.3px">«</div>
<div class="pg dis" style="left:1130.4px">‹</div>
<div class="pg cur" style="left:1176.5px">1</div>
<div class="pg" style="left:1222.6px">2</div>
<div class="pg" style="left:1268.7px">›</div>
<div class="pg" style="left:1314.8px">»</div>
<svg class="arrow" viewBox="0 0 1024 521"><path d="M761 69.700 926 148" stroke="#ffe600" stroke-width="3" fill="none" stroke-linecap="round"/><path d="M928 141.800 937.600 154.500 921.500 154.300z" fill="#ffe600"/></svg>
</div>

</body>
</html>
